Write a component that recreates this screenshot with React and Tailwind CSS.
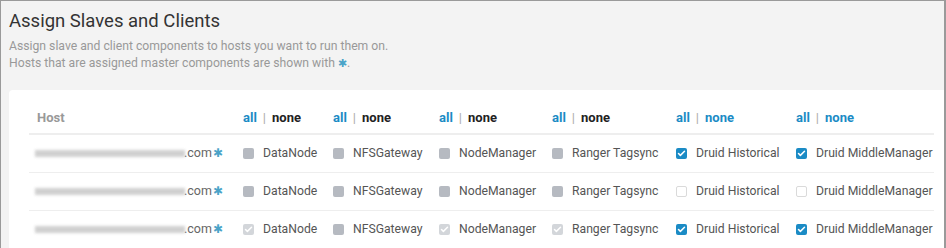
import { Check } from 'lucide-react'

const columns = [
  { name: 'DataNode', noneActive: false },
  { name: 'NFSGateway', noneActive: false },
  { name: 'NodeManager', noneActive: false },
  { name: 'Ranger Tagsync', noneActive: false },
  { name: 'Druid Historical', noneActive: true },
  { name: 'Druid MiddleManager', noneActive: true },
]

// state per cell: 'gray' | 'grayChecked' | 'checked' | 'empty'
const rows = [
  ['gray', 'gray', 'gray', 'gray', 'checked', 'checked'],
  ['gray', 'gray', 'gray', 'gray', 'empty', 'empty'],
  ['grayChecked', 'gray', 'grayChecked', 'grayChecked', 'checked', 'checked'],
]

function Box({ state }) {
  if (state === 'gray') {
    return <span className="inline-block w-[11px] h-[11px] rounded-[2px] bg-[#b6bac1]" />
  }
  if (state === 'grayChecked') {
    return (
      <span className="inline-flex items-center justify-center w-[11px] h-[11px] rounded-[2px] bg-[#d3d6da]">
        <Check className="w-[9px] h-[9px] text-white" strokeWidth={4} />
      </span>
    )
  }
  if (state === 'checked') {
    return (
      <span className="inline-flex items-center justify-center w-[11px] h-[11px] rounded-[2px] bg-[#1b8bc5]">
        <Check className="w-[9px] h-[9px] text-white" strokeWidth={4} />
      </span>
    )
  }
  return <span className="inline-block w-[11px] h-[11px] rounded-[2px] border border-[#dadada] bg-white" />
}

const Star = () => <span className="text-[#4aa3c8] text-[11.5px] ml-[1px]">✱</span>

const grid = 'grid grid-cols-[206px_90px_106px_113px_124px_120px_1fr]'

export default function App() {
  return (
    <div className="w-[946px] h-[248px] overflow-hidden bg-[#f3f3f3] border-t border-l border-r-2 border-[#9a9a9a] font-['Roboto',sans-serif]">
      <div className="pl-[8px] pt-[9px]">
        <h2 className="text-[18.5px] leading-[22px] text-[#333]">Assign Slaves and Clients</h2>
        <p className="mt-[6px] text-[12.2px] leading-[17px] text-[#999]">
          Assign slave and client components to hosts you want to run them on.
          <br />
          Hosts that are assigned master components are shown with <span className="text-[#4aa3c8] text-[10.5px]">✱</span>.
        </p>
      </div>

      <div className="ml-[8px] mt-[18px] bg-white rounded-tl-[4px] pl-[20px] pr-[10px] pt-[13px]">
        <div className={`${grid} h-[32px] items-center border-b-2 border-[#eeeeee] text-[13px] font-bold`}>
          <div className="pl-[8px] text-[#999]">Host</div>
          {columns.map((c) => (
            <div key={c.name} className="pl-[8px] flex items-center">
              <span className="text-[#1b8bc5]">all</span>
              <span className="mx-[6px] text-[#aaa] font-normal">|</span>
              <span className={c.noneActive ? 'text-[#1b8bc5]' : 'text-[#222]'}>none</span>
            </div>
          ))}
        </div>
        {rows.map((r, i) => (
          <div key={i} className={`${grid} h-[38px] items-center border-b border-[#eeeeee] text-[12.2px] text-[#555]`}>
            <div className="pl-[6px] flex items-center">
              <span className="inline-block w-[150px] h-[7px] bg-[#c4c4c4] blur-[1.5px] opacity-80" />
              <span className="text-[12.5px] text-[#666] -ml-[1px]">.com</span>
              <Star />
            </div>
            {r.map((s, j) => (
              <div key={j} className="pl-[8px] flex items-center gap-[9px] whitespace-nowrap">
                <Box state={s} />
                <span>{columns[j].name}</span>
              </div>
            ))}
          </div>
        ))}
      </div>
    </div>
  )
}
